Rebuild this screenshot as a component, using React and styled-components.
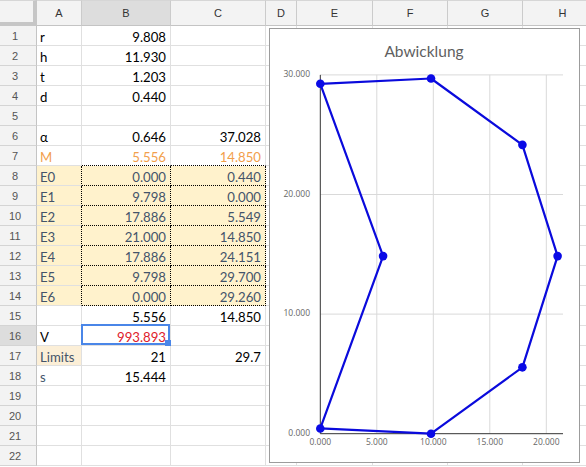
import React from "react";
import styled, { createGlobalStyle } from "styled-components";

const Global = createGlobalStyle`
  html, body { margin: 0; padding: 0; background: #fff; overflow: hidden; }
  body { font-family: Lato, "Open Sans", "Liberation Sans", sans-serif; }
`;

const Sheet = styled.div`
  position: relative;
  display: grid;
  grid-template-columns: 37px 45px 89px 95px 31px 76px 75px 75px 80px;
  grid-template-rows: 26px repeat(22, 20px);
  width: 586px;
  height: 467px;
  overflow: hidden;
`;

const Corner = styled.div`
  background: #f3f3f3;
  box-sizing: border-box;
  border-top: 1px solid #d6d6d6;
  border-right: 4px solid #c6c6c6;
  border-bottom: 4px solid #c6c6c6;
`;

const ColHeader = styled.div`
  background: ${(p) => (p.$active ? "#dddddd" : "#f3f3f3")};
  box-sizing: border-box;
  border-top: 1px solid #d6d6d6;
  border-right: 1px solid #cbcbcb;
  border-bottom: 1px solid #c4c4c4;
  display: flex;
  align-items: center;
  justify-content: center;
  font-family: "Liberation Sans", Arial, sans-serif;
  font-size: 11px;
  color: #333;
`;

const RowHeader = styled.div`
  background: ${(p) => (p.$active ? "#dddddd" : "#f3f3f3")};
  box-sizing: border-box;
  border-right: 1px solid #c4c4c4;
  border-bottom: 1px solid #d4d4d4;
  display: flex;
  align-items: center;
  justify-content: center;
  padding-right: 6px;
  font-family: "Liberation Sans", Arial, sans-serif;
  font-size: 11px;
  color: #555;
`;

const Cell = styled.div`
  position: relative;
  box-sizing: border-box;
  background: ${(p) => p.$bg || "#fff"};
  border-right: 1px ${(p) => (p.$dotR ? "dotted #000" : "solid #e0e0e0")};
  border-bottom: 1px ${(p) => (p.$dotB ? "dotted #000" : "solid #e0e0e0")};
  display: flex;
  align-items: center;
  justify-content: ${(p) => (p.$right ? "flex-end" : "flex-start")};
  padding: 3px 4px 0 3px;
  font-size: 13.2px;
  color: ${(p) => p.$color || "#000"};
  white-space: nowrap;
`;

const Selection = styled.div`
  position: absolute;
  top: -2px;
  left: -1px;
  right: 0;
  bottom: 0;
  border: 2px solid #4a86e8;
  pointer-events: none;
`;

const FillHandle = styled.div`
  position: absolute;
  right: -3px;
  bottom: -3px;
  width: 6px;
  height: 6px;
  background: #4a86e8;
`;

const ChartBox = styled.div`
  position: absolute;
  left: 269px;
  top: 28px;
  width: 311px;
  height: 435px;
  box-sizing: border-box;
  border: 1px solid #9c9c9c;
  background: #fff;
`;

const Plot = styled.svg`
  display: block;
`;

const ORANGE = "#f2a04c";
const SLATE = "#44546a";
const RED = "#e0202a";
const YELLOW = "#fff2cc";
const PEACH = "#fcefd7";

const data = [
  ["r", "9.808", ""],
  ["h", "11.930", ""],
  ["t", "1.203", ""],
  ["d", "0.440", ""],
  ["", "", ""],
  ["α", "0.646", "37.028"],
  ["M", "5.556", "14.850"],
  ["E0", "0.000", "0.440"],
  ["E1", "9.798", "0.000"],
  ["E2", "17.886", "5.549"],
  ["E3", "21.000", "14.850"],
  ["E4", "17.886", "24.151"],
  ["E5", "9.798", "29.700"],
  ["E6", "0.000", "29.260"],
  ["", "5.556", "14.850"],
  ["V", "993.893", ""],
  ["Limits", "21", "29.7"],
  ["s", "15.444", ""],
  ["", "", ""],
  ["", "", ""],
  ["", "", ""],
  ["", "", ""],
];

function cellStyle(r, c) {
  const s = {};
  const eRow = r >= 8 && r <= 14;
  if (r === 7) s.$color = ORANGE;
  if (eRow) {
    s.$color = SLATE;
    s.$bg = YELLOW;
  }
  if (r === 16 && c === 1) s.$color = RED;
  if (r === 17 && c === 0) {
    s.$bg = PEACH;
    s.$color = SLATE;
  }
  if (r === 18 && c === 0) s.$color = SLATE;
  if (eRow && c === 0) s.$dotR = true;
  if (eRow && (c === 1 || c === 2)) {
    s.$dotR = true;
    s.$dotB = true;
  }
  if (r === 7 && (c === 1 || c === 2)) s.$dotB = true;
  if (c > 0) s.$right = true;
  return s;
}

const X = (u) => 50.3 + 11.3 * u;
const Y = (v) => 404.7 - 11.96 * v;

const series = [
  [5.556, 14.85],
  [0, 0.44],
  [9.798, 0],
  [17.886, 5.549],
  [21, 14.85],
  [17.886, 24.151],
  [9.798, 29.7],
  [0, 29.26],
  [5.556, 14.85],
];

function Chart() {
  const pts = series.map(([u, v]) => `${X(u).toFixed(1)},${Y(v).toFixed(1)}`).join(" ");
  const labelFont = { fontFamily: "'Open Sans', 'Liberation Sans', sans-serif", fontSize: 8.5, fill: "#666" };
  return (
    <ChartBox>
      <Plot width="309" height="433" viewBox="0 0 309 433">
        <text
          x="154"
          y="24"
          textAnchor="middle"
          dominantBaseline="middle"
          style={{ fontFamily: "Lato, 'Open Sans', sans-serif", fontSize: 15.5, fill: "#5f5f5f" }}
        >
          Abwicklung
        </text>
        {[10, 20, 30].map((v) => (
          <line key={"h" + v} x1={X(0)} x2={293} y1={Y(v)} y2={Y(v)} stroke="#d9d9d9" strokeWidth="1" />
        ))}
        {[5, 10, 15, 20].map((u) => (
          <line key={"v" + u} x1={X(u)} x2={X(u)} y1={Y(30)} y2={Y(0)} stroke="#d9d9d9" strokeWidth="1" />
        ))}
        <line x1={X(0)} x2={293} y1={Y(0)} y2={Y(0)} stroke="#333" strokeWidth="1" />
        <line x1={X(0)} x2={X(0)} y1={Y(30)} y2={Y(0)} stroke="#333" strokeWidth="1" />
        {[0, 10, 20, 30].map((v) => (
          <text key={"yl" + v} x="40" y={Y(v)} textAnchor="end" dominantBaseline="middle" style={labelFont}>
            {v.toFixed(3)}
          </text>
        ))}
        {[0, 5, 10, 15, 20].map((u) => (
          <text key={"xl" + u} x={X(u)} y="414" textAnchor="middle" dominantBaseline="middle" style={labelFont}>
            {u.toFixed(3)}
          </text>
        ))}
        <polyline points={pts} fill="none" stroke="#0a0adc" strokeWidth="2.2" strokeLinejoin="round" />
        {series.slice(0, 8).map(([u, v], i) => (
          <circle key={i} cx={X(u)} cy={Y(v)} r="4.3" fill="#0a0ae6" />
        ))}
      </Plot>
    </ChartBox>
  );
}

export default function App() {
  const letters = ["A", "B", "C", "D", "E", "F", "G", "H"];
  return (
    <>
      <Global />
      <Sheet>
        <Corner />
        {letters.map((l) => (
          <ColHeader key={l} $active={l === "B"}>
            {l}
          </ColHeader>
        ))}
        {data.map((row, i) => {
          const r = i + 1;
          return (
            <React.Fragment key={r}>
              <RowHeader $active={r === 16}>{r}</RowHeader>
              {row.map((txt, c) => (
                <Cell key={c} {...cellStyle(r, c)}>
                  {txt}
                  {r === 16 && c === 1 && (
                    <Selection>
                      <FillHandle />
                    </Selection>
                  )}
                </Cell>
              ))}
              {[0, 1, 2, 3, 4].map((k) => (
                <Cell key={"e" + k} />
              ))}
            </React.Fragment>
          );
        })}
        <Chart />
      </Sheet>
    </>
  );
}
